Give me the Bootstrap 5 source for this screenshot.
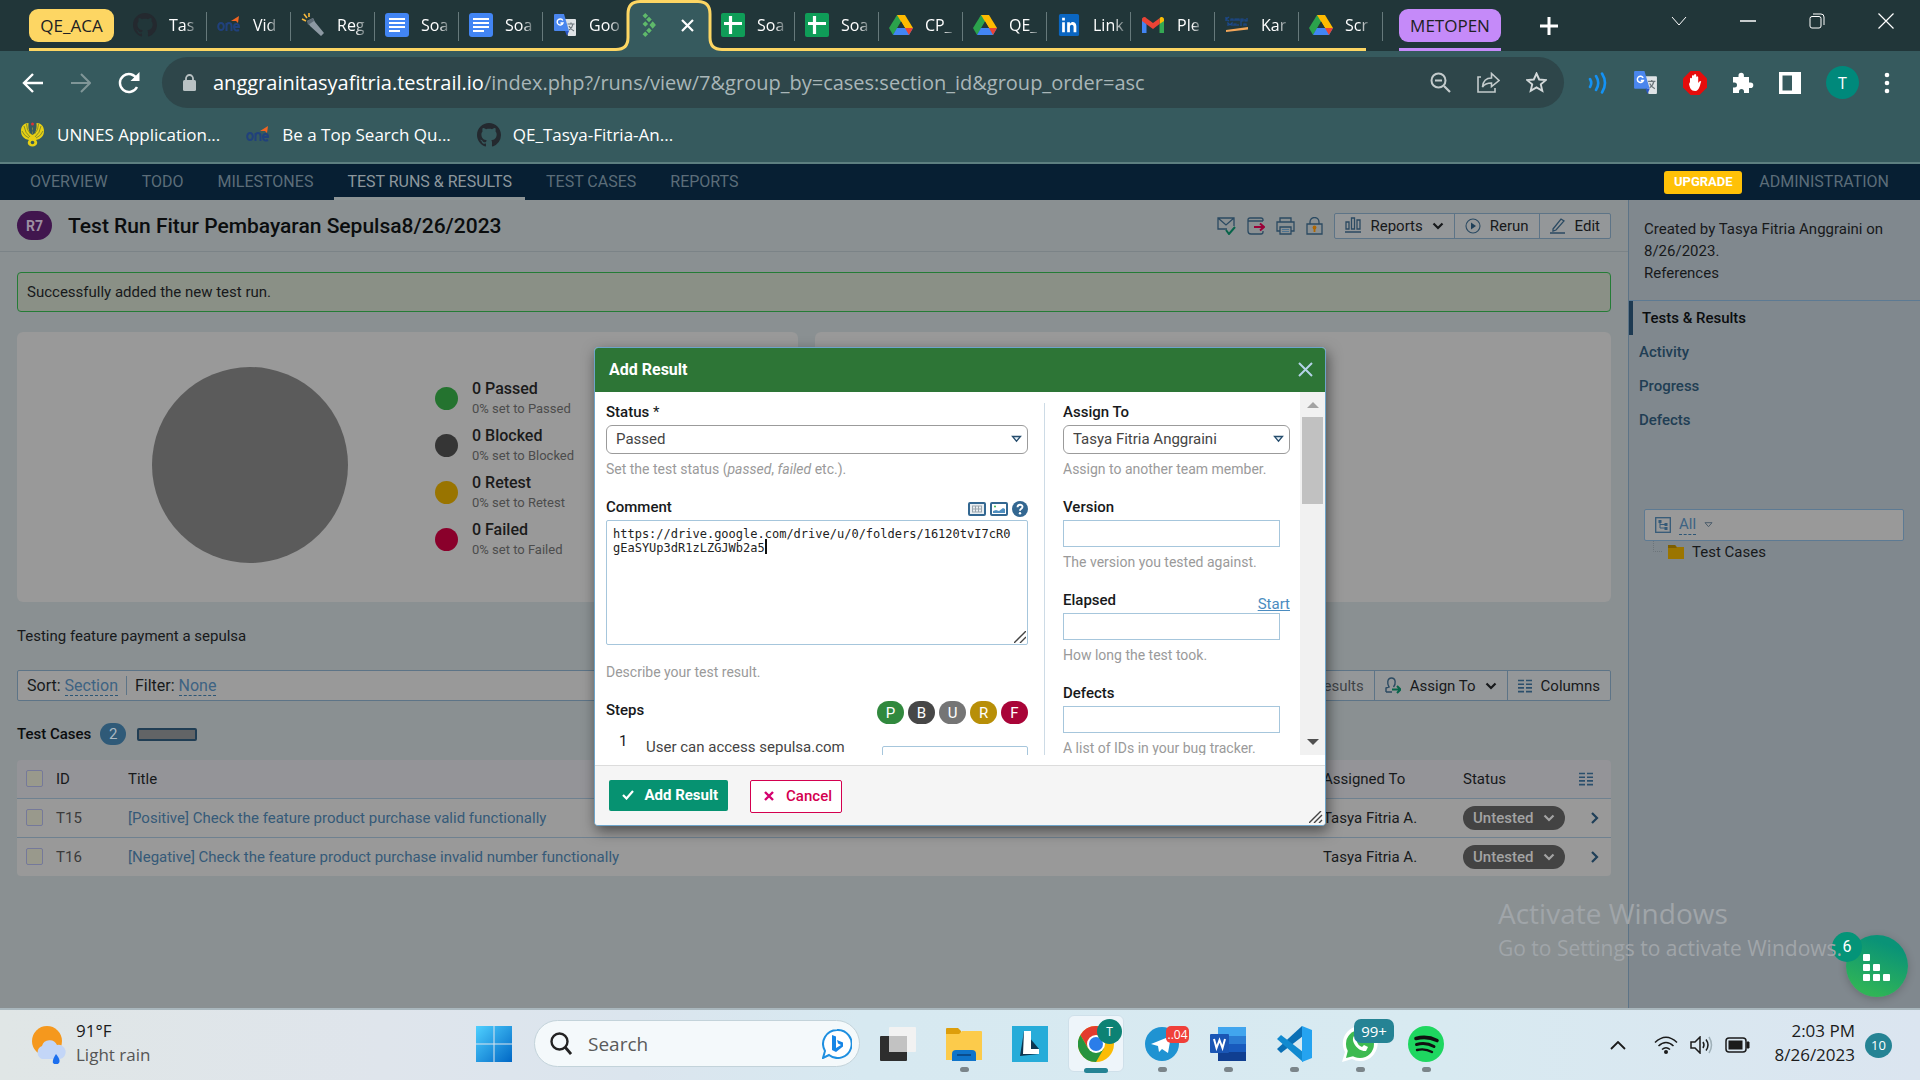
<!DOCTYPE html>
<html lang="en">
<head>
<meta charset="utf-8">
<meta name="viewport" content="width=device-width, initial-scale=1">
<title>Test Run Fitur Pembayaran Sepulsa8/26/2023 - TestRail</title>
<link rel="stylesheet" href="https://cdn.jsdelivr.net/npm/bootstrap@5.3.0/dist/css/bootstrap.min.css">
<style>
body{font-family:Roboto,"Liberation Sans",sans-serif;font-size:15px;line-height:20px;color:#17191b;background:#8a9092}
svg{display:block;flex:none}
button{color:inherit}
.seg{font-family:"Open Sans","Noto Sans",sans-serif}
.plain-btn{background:none;border:0;padding:0;display:flex;align-items:center;justify-content:center}
/* browser chrome */
.tabstrip{background:#213639;height:51px;color:#fff;font-size:16px}
.tabgroup{margin-left:29px}
.tabgroup::after{content:"";position:absolute;left:0;right:17px;bottom:0;height:3px;background:#fdd663}
.chip{height:33px;border-radius:9px;color:#202124;font-size:17px;margin-top:9px;border:0;padding:0}
.chip-y{background:#fdd663;width:85px;margin-right:9px}
.chip-p{background:#c58af9;width:102px}
.chipbox-p{border-bottom:3px solid #c58af9}
.tab{width:84px;height:51px;padding:0 4px 1px 10px;gap:12px}
.tab::after{content:"";position:absolute;right:0;top:12px;height:29px;width:1px;background:#66797b}
.tab.nosep::after{display:none}
.tab span{white-space:nowrap;-webkit-mask-image:linear-gradient(90deg,#000 65%,rgba(0,0,0,.3));mask-image:linear-gradient(90deg,#000 65%,rgba(0,0,0,.3))}
.tab-shape{position:absolute;left:-15px;top:0;z-index:1}
.tab-top{position:relative;z-index:2}
.winctl{width:69px;height:42px}
.chrome-bar{background:#365a5e;color:#fff}
.toolbar-row{height:63px}
.omnibox{background:#2e464a;height:51px;border-radius:26px;font-size:20px;color:#a9b6b8}
.omni-host{color:#fff}
.bookmarks{height:50px;font-size:17px;padding-left:20px;border-bottom:2px solid #5d7f80;padding-bottom:7px}
.bookmarks a{color:#fff;text-decoration:none;gap:12px}
.avatar{width:33px;height:33px;background:#00897b;font-size:16px}
/* app */
.appnav{background:#071f33;height:36px;font-size:16px}
.appnav a{color:#5c6d79;text-decoration:none;padding:0 13px;height:36px;line-height:35px}
.appnav a.on{color:#8d979d;border-bottom:3px solid #8c9496}
.upgrade{background:#ffc107;color:#fff;font-weight:700;font-size:13px;border:0;border-radius:3px;height:23px;width:78px}
.side{width:292px;flex:none;background:#80888e;border-left:1px solid #5d7487}
.titlebar{height:52px;border-bottom:1px solid #7b8387;padding:0 17px}
.runbadge{width:35px;height:29px;border-radius:15px;background:#41164e;color:#9c8fa1;font-size:14px;font-weight:700}
h1.run-title{font-size:21px;line-height:24px;font-weight:500;margin:0;color:#0b0d0e}
.grp{border:1px solid #5d7487;background:#949799;border-radius:2px}
.grp button{border-radius:0;border:0;border-left:1px solid #5d7487;padding:0 10px;font-size:15px;background:none;display:flex;align-items:center;gap:9px;line-height:20px}
.grp button:first-child{border-left:0}
.okmsg{height:40px;border:1px solid #247c36;border-radius:4px;background:#8a9086;padding:0 9px;font-size:15px}
.panel{background:#999;border-radius:6px;height:270px}
.panel-l{flex:0 0 49%;padding:0 0 4px 135px}
.pie{width:196px;height:196px;background:#5b5b5b}
.legend-list{margin-left:87px;padding-top:8px}
.leg{height:47px;gap:14px}
.leg i{width:23px;height:23px;border-radius:50%}
.leg b{font-weight:500;font-size:16px;display:block;line-height:21px;color:#1b1b1b}
.leg em{font-style:normal;font-size:13px;color:#4c4c4c;display:block;line-height:20px}
.filterbar{height:31px;border:1px solid #5d7487;border-radius:2px;background:#999}
.sorts{font-size:16px;padding-left:9px}
.dash{color:#3d6383;text-decoration:none;border-bottom:1px dashed #2c5676;line-height:19px}
.cnt{width:26px;height:22px;border-radius:11px;background:#2f5a78;color:#a9b7c1}
.runs{margin:0;border-radius:4px;overflow:hidden;--bs-table-bg:#999;table-layout:fixed}
.runs th,.runs td{padding:0;font-weight:400;vertical-align:middle;height:39px;border-bottom:1px solid #6f8190;color:#17191b;background:#999;box-shadow:none}
.runs th{background:#949498;height:38px}
.runs tr:last-child td{border-bottom:0}
.runs a{color:#355a78;text-decoration:none}
.runs .form-check-input{width:17px;height:17px;margin:0 0 0 9px;display:block;border:1px solid #75799a;border-radius:2px;background-color:#99998c}
.pill{background:#434343;color:#a3a3a3;border:0;border-radius:12px;height:24px;width:102px;font-weight:500;font-size:15px;display:flex;align-items:center;justify-content:space-between;padding:0 10px}
.side-info{padding:18px 15px 17px;line-height:22px;height:101px;border-bottom:1px solid #5d7a93}
.side-nav a{display:block;height:34px;line-height:34px;padding-left:10px;font-weight:500;color:#213e54;text-decoration:none}
.side-nav a.on{border-left:4px solid #1d3a52;padding-left:9px;color:#0b0d0e}
.treebox{height:32px;border:1px solid #5d7a93;border-radius:2px;background:#999;margin:72px 16px 0 15px;padding:0 10px;gap:8px}
.treerow{padding-left:24px;height:22px;gap:7px}
.watermark{position:absolute;left:1498px;bottom:44px;color:#a0a5a9;pointer-events:none;white-space:nowrap}
.watermark div{font-size:28px;line-height:38px}
.watermark p{font-size:21px;line-height:32px;margin:0}
.helper{position:absolute;right:12px;bottom:11px;width:62px;height:62px;border:0;border-radius:50%;background:linear-gradient(200deg,#0a9377 20%,#2fb457 85%);box-shadow:0 2px 8px rgba(0,0,0,.2)}
.helper span{position:absolute;left:-14px;top:-3px;width:30px;height:30px;border-radius:50%;background:#049478;color:#fff;font-size:16px;line-height:30px}
/* dialog */
.veil{position:absolute;left:0;right:0;top:0;bottom:0}
.dlg{width:732px;border:1px solid #6da4c9;border-radius:4px;background:#fff;overflow:hidden;box-shadow:2px 5px 14px rgba(0,0,0,.5)}
.dlg-head{background:#2d7536;color:#fff;height:44px;font-weight:700;font-size:16px;padding:0 12px 0 14px}
.dlg-body{height:363px;overflow:hidden;margin-bottom:10px}
.dlg-foot{border-top:1px solid #dcdcdc;background:#f5f5f5;height:60px;padding:14px;position:relative;gap:22px}
.lcol{width:450px;padding-left:11px;padding-right:16px;margin-top:11px;border-right:1px solid #cddbe6}
.rcol{padding:11px 10px 0 18px}
.flabel{font-weight:500;font-size:15px;line-height:18px;height:18px;color:#17191b;margin-bottom:4px}
.hint{color:#9a9a9a;font-size:14px;line-height:20px;margin:5px 0 19px}
.dlg .form-select{height:29px;border:1px solid #9b9b9b;border-radius:6px;padding:0 28px 0 9px;font-size:15px;line-height:26px;color:#444;background-color:#fff;background-position:right 5px center;background-size:11px 8px;background-image:url("data:image/svg+xml,%3Csvg xmlns='http://www.w3.org/2000/svg' viewBox='0 0 11 8'%3E%3Cpath d='M1.5 1.5h8L5.500 6.200z' fill='%23e8f2fa' stroke='%23264d6d' stroke-width='1.300'/%3E%3C/svg%3E")}
.dlg .form-control{border:1px solid #a6c6dc;border-radius:0;padding:0;height:27px;width:217px}
.dlg textarea.form-control{width:100%;height:125px;border-radius:2px;padding:6px;font:12px/14px "DejaVu Sans Mono",monospace;color:#222;resize:none;overflow:hidden}
.caret{position:absolute;left:159px;top:19px;width:2px;height:15px;background:#111}
.grip{position:absolute;right:2px;bottom:2px}
.st{width:27px;height:23px;border-radius:12px;border:0;color:#fff;font-size:15px;line-height:24px;padding:0}
.sbar{width:25px;background:#f1f1f1;padding:10px 2px}
.sthumb{height:87px;background:#c1c1c1}
.addbtn{height:31px;width:119px;background:#069271;border:0;border-radius:2px;color:#fff;font-weight:700;font-size:15px;padding:0 10px 0 13px}
.cxbtn{height:33px;width:92px;background:#fff;border:1px solid #d4004f;border-radius:2px;color:#d4004f;font-weight:500;font-size:15px;padding:0 9px 0 13px}
/* taskbar */
.taskbar{height:72px;border-top:2px solid #a9b7bd;background:linear-gradient(90deg,#e0e6e6 0,#dfe5ec 20%,#dbe5ee 33%,#d7e9f1 45%,#d8eaf1 75%,#dbe5f0 100%);display:grid;grid-template-columns:1fr auto 1fr;color:#1b1b1b;font-size:17px}
.slot{width:66px;height:70px;position:relative;display:flex;align-items:center;justify-content:center;background:none;border:0;padding:0 0 2px}
.slot.run::after{content:"";position:absolute;left:29px;bottom:8px;width:9px;height:5px;border-radius:3px;background:#7b858a}
.slot.act::after{content:"";position:absolute;left:21px;width:24px;height:5px;border-radius:3px;background:#258394;bottom:7px}
.slot.act::before{content:"";position:absolute;left:5px;top:5px;width:56px;height:57px;border-radius:6px;background:#eef5fa;border:1px solid #cfe0ea}
.slot svg{position:relative}
.slot b{position:absolute;font-weight:400;color:#fff;text-align:center}
.find{width:326px;height:47px;border-radius:24px;background:#f4f9fb;border:1px solid #c3d3da;margin:10px 5px 0 7px;padding:0 7px 0 15px;gap:14px}
.find input{background:none;border:0;outline:0;font-size:19px;color:#444;width:100%}
.find input::placeholder{color:#5a5a5a;opacity:1}
.clock{line-height:24px}
.notif{margin-left:10px;width:27px;height:25px;background:#258394;font-size:13px;line-height:25px}
</style>
<script src="https://cdn.jsdelivr.net/npm/bootstrap@5.3.0/dist/js/bootstrap.bundle.min.js"></script>
</head>
<body class="d-flex flex-column vh-100 overflow-hidden">
<svg width="0" height="0" class="position-absolute" aria-hidden="true">
<symbol id="gh" viewBox="0 0 16 16"><path fill="#24292f" d="M8 0C3.580 0 0 3.580 0 8c0 3.540 2.290 6.530 5.470 7.590.4.070.55-.17.55-.38 0-.19-.01-.82-.01-1.490-2.010.37-2.530-.49-2.690-.94-.09-.23-.48-.94-.82-1.130-.28-.15-.68-.52-.01-.53.63-.01 1.080.58 1.230.82.72 1.210 1.870.87 2.330.66.07-.52.28-.87.51-1.070-1.780-.2-3.640-.89-3.640-3.950 0-.87.31-1.590.82-2.150-.08-.2-.36-1.020.08-2.120 0 0 .67-.21 2.200.82.64-.18 1.320-.27 2-.27s1.360.09 2 .27c1.530-1.040 2.200-.82 2.200-.82.44 1.100.16 1.920.08 2.120.51.56.82 1.270.82 2.150 0 3.070-1.870 3.750-3.650 3.950.29.25.54.73.54 1.480 0 1.070-.01 1.930-.01 2.200 0 .21.15.46.55.38A8.010 8.010 0 0 0 16 8c0-4.420-3.580-8-8-8z"/></symbol>
<symbol id="one" viewBox="0 0 24 24"><g fill="none" stroke="#20417c" stroke-width="2"><ellipse cx="4" cy="13.500" rx="2.800" ry="3.600"/><path d="M9.500 18v-8M9.500 13c0-4 5-4 5 0v5M17 14h5c0-4-5-4-5 0 0 4 3 4 5 3"/></g><path d="M14 8l8-5-1 7-2-2z" fill="#f26522"/></symbol>
<symbol id="docs" viewBox="0 0 24 24"><rect width="24" height="24" rx="3" fill="#4285f4"/><path d="M4 6h16M4 10h16M4 14h16M4 18h11" stroke="#fff" stroke-width="2"/></symbol>
<symbol id="sheet" viewBox="0 0 24 24"><rect width="24" height="24" rx="2" fill="#0f9d58"/><path d="M3 10.500h18M9.500 3v18" stroke="#fff" stroke-width="3.200"/></symbol>
<symbol id="gtr" viewBox="0 0 24 24"><path d="M10 6h12a1 1 0 0 1 1 1v15a1 1 0 0 1-1 1h-7z" fill="#dfe3e6"/><path d="M1 2a1 1 0 0 1 1-1h9l5 17H2a1 1 0 0 1-1-1z" fill="#4a86ee"/><path d="M12 18h4l-2 5z" fill="#2a56c6"/><path d="M9.800 7.500A3 3 0 1 0 10 10H7.500" fill="none" stroke="#fff" stroke-width="1.400"/><path d="M14.500 11h7M18 9.500V11m2 0c-.5 3-2.500 5-4 6m0-4c1 2 3 4 5 5" fill="none" stroke="#6b757b" stroke-width="1.200"/></symbol>
<symbol id="drive" viewBox="0 0 24 22"><path d="M8 1h8l-8 14-4 6-4-7z" fill="#2ba24c"/><path d="M8 1h8l8 13h-8z" fill="#ffba00"/><path d="M4 21l4-7h16l-4 7z" fill="#4285f4"/><path d="M16 14h8l-4 7z" fill="#ea4335"/><path d="M12 7.500L8.200 14h7.600z" fill="#213639"/></symbol>
<symbol id="tr" viewBox="0 0 16 26"><g fill="#5fb96b"><path d="M4 0l3 3-3 3-3-3zM8 4l3 3-3 3-3-3zM4 9l3 3-3 3-3-3zM8 12l0 0zM12 9l3.500 4-3.500 4-3.500-4zM8 16l3 3-3 3-3-3zM4 20l3 3-3 3-3-3z"/></g></symbol>
<symbol id="chev" viewBox="0 0 12 8"><path d="M1.500 1.500L6 6l4.500-4.500" fill="none" stroke="currentColor" stroke-width="2.200"/></symbol>
<symbol id="cols" viewBox="0 0 14 14"><path d="M0 1.500h6M8 1.500h6M0 5.200h6M8 5.200h6M0 8.900h6M8 8.900h6M0 12.600h6M8 12.600h6" stroke="#2b4f6c" stroke-width="1.600"/></symbol>
</svg>

<div class="tabstrip seg d-flex flex-shrink-0">
  <div class="tabgroup d-flex position-relative">
    <button class="chip chip-y">QE_ACA</button>
    <div class="tab d-flex align-items-center position-relative"><svg width="24" height="24"><use href="#gh"/></svg><span>Tas</span></div>
    <div class="tab d-flex align-items-center position-relative"><svg width="24" height="24"><use href="#one"/></svg><span>Vid</span></div>
    <div class="tab d-flex align-items-center position-relative"><svg width="24" height="24" viewBox="0 0 24 24"><path d="M6 8l6-3 2 4 9 11-3 3L9 13z" fill="#8d99a3"/><path d="M6 8l6-3 1 3-6 4z" fill="#5d6a75"/><path d="M1 6l4 2M3 1l3 4M8 0v4" stroke="#f6b83c" stroke-width="1.600"/></svg><span>Reg</span></div>
    <div class="tab d-flex align-items-center position-relative"><svg width="24" height="24"><use href="#docs"/></svg><span>Soa</span></div>
    <div class="tab d-flex align-items-center position-relative"><svg width="24" height="24"><use href="#docs"/></svg><span>Soa</span></div>
    <div class="tab nosep d-flex align-items-center position-relative"><svg width="24" height="24"><use href="#gtr"/></svg><span>Goo</span></div>
    <div class="tab nosep d-flex align-items-center position-relative" style="z-index:1">
      <svg class="tab-shape" width="114" height="51" viewBox="0 0 114 51"><path d="M0 51v-1.500h4q12 0 12-12V14q0-12.500 12-12.500h58q12 0 12 12.500v23.500q0 12 12 12h4V51z" fill="#365a5e"/><path d="M0 49.500h4q12 0 12-12V14q0-12.500 12-12.500h58q12 0 12 12.500v23.500q0 12 12 12h4" fill="none" stroke="#fdd663" stroke-width="3"/></svg>
      <svg class="tab-top" width="24" height="24"><use href="#tr"/></svg>
      <button class="plain-btn tab-top ms-2" aria-label="Close tab"><svg width="13" height="13" viewBox="0 0 13 13"><path d="M1 1l11 11M12 1L1 12" stroke="#fff" stroke-width="2.200"/></svg></button></div>
    <div class="tab d-flex align-items-center position-relative"><svg width="24" height="24"><use href="#sheet"/></svg><span>Soa</span></div>
    <div class="tab d-flex align-items-center position-relative"><svg width="24" height="24"><use href="#sheet"/></svg><span>Soa</span></div>
    <div class="tab d-flex align-items-center position-relative"><svg width="24" height="22"><use href="#drive"/></svg><span>CP_</span></div>
    <div class="tab d-flex align-items-center position-relative"><svg width="24" height="22"><use href="#drive"/></svg><span>QE_</span></div>
    <div class="tab d-flex align-items-center position-relative"><svg width="24" height="22" viewBox="0 0 24 24"><rect x="1" width="22" height="24" rx="2" fill="#0a66c2"/><path d="M4.500 9h3v11h-3zM4.500 4h3v3h-3zM10 9h3v1.500c2-3 7-2 7 2.500v7h-3v-6c0-3-4-3-4 0v6h-3z" fill="#fff"/></svg><span>Link</span></div>
    <div class="tab d-flex align-items-center position-relative"><svg width="24" height="18" viewBox="0 0 24 18"><path d="M1 2v15h4.500V8z" fill="#4285f4"/><path d="M23 2v15h-4.500V8z" fill="#34a853"/><path d="M18.500 8V2.500C20 0 23 1 23 3.500V5z" fill="#fbbc04"/><path d="M1 3.500C1 1 4 0 5.500 2.200L12 7l6.500-4.800V8L12 13 1 5z" fill="#ea4335"/></svg><span>Ple</span></div>
    <div class="tab d-flex align-items-center position-relative"><svg width="24" height="18" viewBox="0 0 24 18"><path d="M1 5V1M1 3l3-2M1 3l3 2M6 5V3h2v2M10 5V3h2v2V3h2v2M16 7V3h2v2h-2M20 3v2h2V2M3 10V7l2 2 2-2v3M9 10V8h2v2M13 10V8M16 10V7M19 10V8h2v2" fill="none" stroke="#1c4a8f" stroke-width="1.200"/><path d="M1 14l22-3v2.500L1 16z" fill="#f2a65a"/></svg><span>Kar</span></div>
    <div class="tab d-flex align-items-center position-relative"><svg width="24" height="22"><use href="#drive"/></svg><span>Scr</span></div>
  </div>
  <div class="chipbox-p ms-3"><button class="chip chip-p">METOPEN</button></div>
  <button class="plain-btn me-auto" style="width:34px;margin-left:31px" aria-label="New tab"><svg width="18" height="18" viewBox="0 0 18 18"><path d="M9 0v18M0 9h18" stroke="#fff" stroke-width="3"/></svg></button>
  <button class="plain-btn winctl" aria-label="Search tabs"><svg width="16" height="9" viewBox="0 0 16 9"><path d="M1 0l7 8 7-8" fill="none" stroke="#fff"/></svg></button>
  <button class="plain-btn winctl" aria-label="Minimize"><svg width="16" height="2"><path d="M0 1h16" stroke="#fff" stroke-width="1.500"/></svg></button>
  <button class="plain-btn winctl" aria-label="Restore"><svg width="16" height="16" viewBox="0 0 16 16"><rect x="1" y="3.500" width="11" height="11.500" rx="2" fill="none" stroke="#fff"/><path d="M4 1h8q3 0 3 3v8" fill="none" stroke="#fff"/></svg></button>
  <button class="plain-btn winctl" aria-label="Close"><svg width="16" height="16" viewBox="0 0 16 16"><path d="M.5.5l15 15M15.500.5l-15 15" stroke="#fff" stroke-width="1.200"/></svg></button>
</div>

<div class="chrome-bar seg flex-shrink-0">
  <div class="toolbar-row d-flex align-items-center" style="padding-left:22px">
    <button class="plain-btn" aria-label="Back"><svg width="22" height="20" viewBox="0 0 22 20"><path d="M21 10H2M11 1l-9 9 9 9" fill="none" stroke="#fff" stroke-width="2.400"/></svg></button>
    <button class="plain-btn" style="margin-left:27px" aria-label="Forward"><svg width="20" height="20" viewBox="0 0 20 20"><path d="M0 10h19M10 1l9 9-9 9" fill="none" stroke="#809698" stroke-width="2"/></svg></button>
    <button class="plain-btn" style="margin-left:27px" aria-label="Reload"><svg width="23" height="22" viewBox="0 0 23 22"><path d="M19 15a9 9 0 1 1 0-8" fill="none" stroke="#fff" stroke-width="2.400"/><path d="M21.500 0v9h-9z" fill="#fff"/></svg></button>
    <div class="omnibox d-flex align-items-center flex-grow-1" style="margin:0 24px 0 21px;padding:0 17px 0 21px">
      <svg width="13" height="17" viewBox="0 0 13 17"><rect y="6" width="13" height="11" rx="1.500" fill="#b9c2c4"/><path d="M3 7V4.500a3.500 3.500 0 0 1 7 0V7" fill="none" stroke="#b9c2c4" stroke-width="1.800"/></svg>
      <div class="flex-grow-1" style="margin-left:17px"><span class="omni-host">anggrainitasyafitria.testrail.io</span>/index.php?/runs/view/7&amp;group_by=cases:section_id&amp;group_order=asc</div>
      <div class="d-flex align-items-center" style="gap:26px">
      <svg width="21" height="21" viewBox="0 0 21 21"><circle cx="8.500" cy="8.500" r="7" fill="none" stroke="#c3cbcc" stroke-width="2"/><path d="M5 8.500h7M14 14l6 6" stroke="#c3cbcc" stroke-width="2.200"/></svg>
      <svg width="23" height="21" viewBox="0 0 23 21"><path d="M4 5H1v15h17v-4" fill="none" stroke="#c3cbcc" stroke-width="1.600"/><path d="M5.500 15c.5-6 4-9 9-9V1.500L22 8.500l-7.500 6V11c-4 0-7 1-9 4z" fill="none" stroke="#c3cbcc" stroke-width="1.600"/></svg>
      <svg width="21" height="21" viewBox="0 0 21 21"><path d="M10.500 1.500l2.700 6 6.600.6-5 4.300 1.500 6.500-5.800-3.500-5.800 3.500 1.500-6.500-5-4.300 6.600-.6z" fill="none" stroke="#d3d9da" stroke-width="1.900"/></svg>
      </div>
    </div>
    <div class="d-flex align-items-center" style="gap:25px;padding-right:30px">
      <svg width="20" height="22" viewBox="0 0 20 22"><g fill="none" stroke="#1492f5" stroke-width="2.600" stroke-linecap="round"><path d="M2 7q2.500 4 0 8M8 4q4.500 7 0 14M14 1.500q6 9.500 0 19"/></g></svg>
      <svg width="25" height="25"><use href="#gtr"/></svg>
      <svg width="24" height="24" viewBox="0 0 24 24"><path d="M7.500 0h9L24 7.500v9L16.500 24h-9L0 16.500v-9z" fill="#e60c0c"/><path d="M7 11V7.500q1-1.500 2 0V5q1-2 2 0V4q1.200-2 2.200 0v2q1-1.500 2 0v6q2-3 3-1.500c-1 2-1.500 9.500-6 9.500S7 17 6 13z" fill="#fff"/></svg>
      <svg width="22" height="22" viewBox="0 0 22 22"><path d="M1 5h5.500V3.500a2.700 2.700 0 0 1 5.400 0V5H17v5.500h1.500a2.800 2.800 0 0 1 0 5.600H17V21h-5v-1.500a2.500 2.500 0 0 0-5 0V21H1v-5.500h1.500a2.500 2.500 0 0 0 0-5H1z" fill="#fff"/></svg>
      <svg width="22" height="22" viewBox="0 0 22 22"><path fill-rule="evenodd" d="M0 0h22v22H0zM3.500 3.500v15H13v-15z" fill="#fff"/></svg>
      <div class="avatar rounded-circle d-flex align-items-center justify-content-center">T</div>
      <svg width="6" height="22" viewBox="0 0 6 22"><g fill="#fff"><circle cx="3" cy="3" r="2.300"/><circle cx="3" cy="11" r="2.300"/><circle cx="3" cy="19" r="2.300"/></g></svg>
    </div>
  </div>
  <div class="bookmarks d-flex align-items-center" style="gap:26px">
    <a href="#" class="d-flex align-items-center"><svg width="25" height="25" viewBox="0 0 25 25"><path d="M12.500 5C11 8 14 9 12.500 13 9 11 8 7 8.500 1 4 1 1 4 1 9c0 5 3 8 8 9-2 2-2 6 3.500 6.500C18 24 18 20 16 18c5-1 8-4 8-9 0-5-3-8-7.500-8 .5 6-.5 10-4 12" fill="#e6cf14"/><path d="M4 4q1 7 6 11M21 4q-1 7-6 11M2 9q2 5 7 7M23 9q-2 5-7 7M6.500 2q0 6 4 10M18.500 2q0 6-4 10" stroke="#6f7d2c" stroke-width=".8" fill="none"/><circle cx="12.500" cy="20.500" r="1.800" fill="#365a5e"/><circle cx="12.500" cy="2" r="1.500" fill="#d33"/></svg>UNNES Application...</a>
    <a href="#" class="d-flex align-items-center"><svg width="24" height="24"><use href="#one"/></svg>Be a Top Search Qu...</a>
    <a href="#" class="d-flex align-items-center"><svg width="24" height="24"><use href="#gh"/></svg>QE_Tasya-Fitria-An...</a>
  </div>
</div>

<div class="flex-grow-1 d-flex flex-column position-relative overflow-hidden">
  <nav class="appnav d-flex align-items-center flex-shrink-0" style="padding:0 18px 0 17px">
    <a href="#">OVERVIEW</a><a href="#" class="ms-2">TODO</a><a href="#" class="ms-2">MILESTONES</a><a href="#" class="on ms-2">TEST RUNS &amp; RESULTS</a><a href="#" class="ms-2">TEST CASES</a><a href="#" class="ms-2">REPORTS</a>
    <button class="upgrade ms-auto">UPGRADE</button><a href="#" class="ms-1">ADMINISTRATION</a>
  </nav>
  <div class="d-flex flex-grow-1">
    <main class="flex-grow-1" style="min-width:0">
      <div class="titlebar d-flex align-items-center">
        <div class="runbadge d-flex align-items-center justify-content-center me-3">R7</div>
        <h1 class="run-title">Test Run Fitur Pembayaran Sepulsa8/26/2023</h1>
        <div class="d-flex align-items-center ms-auto" style="gap:11px">
          <svg width="19" height="18" viewBox="0 0 19 18"><path d="M10 12H1V1h16v8M1 1l8 7 8-7" fill="none" stroke="#2b4a62" stroke-width="1.300"/><path d="M9 13l3 4 6-7" fill="none" stroke="#07644a" stroke-width="2"/></svg>
          <svg width="18" height="18" viewBox="0 0 18 18"><path d="M16 4V3q0-2-2-2H3Q1 1 1 3v11q0 3 3 3h10q2 0 2-2v-1M1 4h15" fill="none" stroke="#2b4a62" stroke-width="1.300"/><path d="M7 10h9M13 6.500l4 3.500-4 3.500" fill="none" stroke="#9b0038" stroke-width="2"/></svg>
          <svg width="19" height="18" viewBox="0 0 19 18"><path d="M4 5V1h11v4M4 14H1V5h17v9h-3M4 10h11v7H4z" fill="none" stroke="#2b4a62" stroke-width="1.300"/><path d="M6 12.500h7M6 14.500h7" stroke="#4d7391"/></svg>
          <svg width="17" height="18" viewBox="0 0 17 18"><path d="M4 7V5a4.500 4.500 0 0 1 9 0v2M1 7h15v10H1z" fill="none" stroke="#2b4a62" stroke-width="1.300"/><circle cx="8.500" cy="10.500" r="1.900" fill="#b06700"/><path d="M8.500 11v4" stroke="#b06700" stroke-width="1.800"/></svg>
          <div class="grp d-flex" style="height:26px">
            <button><svg width="16" height="17" viewBox="0 0 16 17"><path d="M1 5h3v7H1zM6.500 1h3v11h-3zM12 3h3v9h-3zM0 15h16" fill="none" stroke="#2b4a62" stroke-width="1.300"/></svg>Reports<svg width="12" height="8"><use href="#chev"/></svg></button>
            <button><svg width="16" height="16" viewBox="0 0 16 16"><circle cx="8" cy="8" r="7" fill="none" stroke="#2b4a62" stroke-width="1.100"/><path d="M6 4.500l5 3.500-5 3.500z" fill="#1f3f58"/></svg>Rerun</button>
            <button><svg width="16" height="16" viewBox="0 0 16 16"><path d="M3 11L11 1l3 2-8 9-3 1zM0 15h15" fill="none" stroke="#2b4a62" stroke-width="1.300"/></svg>Edit</button>
          </div>
        </div>
      </div>
      <div style="padding:20px 17px 0">
        <div class="okmsg d-flex align-items-center">Successfully added the new test run.</div>
        <div class="d-flex" style="gap:17px;margin-top:20px">
          <div class="panel panel-l d-flex align-items-center">
            <div class="pie rounded-circle"></div>
            <div class="legend-list">
              <div class="leg d-flex align-items-center"><i style="background:#24732f"></i><div><b>0 Passed</b><em>0% set to Passed</em></div></div>
              <div class="leg d-flex align-items-center"><i style="background:#353535"></i><div><b>0 Blocked</b><em>0% set to Blocked</em></div></div>
              <div class="leg d-flex align-items-center"><i style="background:#997400"></i><div><b>0 Retest</b><em>0% set to Retest</em></div></div>
              <div class="leg d-flex align-items-center"><i style="background:#8a002b"></i><div><b>0 Failed</b><em>0% set to Failed</em></div></div>
            </div>
          </div>
          <div class="panel flex-grow-1"></div>
        </div>
        <p class="mb-0" style="padding:24px 0">Testing feature payment a sepulsa</p>
        <div class="filterbar d-flex">
          <div class="sorts d-flex align-items-center">Sort:&nbsp;<a href="#" class="dash">Section</a><span class="mx-2" style="width:1px;height:19px;background:#5d7487"></span>Filter:&nbsp;<a href="#" class="dash">None</a></div>
          <div class="grp border-0 d-flex ms-auto">
            <button disabled class="text-body-secondary">Add Results</button>
            <button><svg width="16" height="17" viewBox="0 0 16 17"><path d="M1 15v-4l3-1c-2-3-2-9 2.500-9S11 7 8.500 10M1 15h6" fill="none" stroke="#2b4a62" stroke-width="1.400"/><path d="M7 12.500h8M12 9l3.500 3.500L12 16" fill="none" stroke="#07644a" stroke-width="2"/></svg>Assign To<svg width="12" height="8"><use href="#chev"/></svg></button>
            <button><svg width="14" height="14"><use href="#cols"/></svg>Columns</button>
          </div>
        </div>
        <div class="d-flex align-items-center" style="height:59px;gap:9px;padding-top:7px"><span style="font-weight:500;color:#0b0d0e">Test Cases</span><span class="cnt d-flex align-items-center justify-content-center">2</span><span style="margin-left:2px;width:60px;height:13px;border:2px solid #213e54;border-radius:2px;background:#626466"></span></div>
        <table class="table runs">
          <colgroup><col style="width:39px"><col style="width:72px"><col><col style="width:140px"><col style="width:112px"><col style="width:36px"></colgroup>
          <thead><tr><th><input class="form-check-input" type="checkbox" aria-label="Select all"></th><th>ID</th><th>Title</th><th>Assigned To</th><th>Status</th><th><svg class="ms-1" width="14" height="14"><use href="#cols"/></svg></th></tr></thead>
          <tbody>
          <tr><td><input class="form-check-input" type="checkbox" aria-label="T15"></td><td style="color:#3b3b3b">T15</td><td><a href="#">[Positive] Check the feature product purchase valid functionally</a></td><td>Tasya Fitria A.</td><td><button class="pill">Untested<svg width="12" height="8"><use href="#chev"/></svg></button></td><td><a href="#" aria-label="Open T15"><svg width="8" height="12" viewBox="0 0 8 12" class="ms-3"><path d="M1 1l5 5-5 5" fill="none" stroke="#1f3f58" stroke-width="2.200"/></svg></a></td></tr>
          <tr><td><input class="form-check-input" type="checkbox" aria-label="T16"></td><td style="color:#3b3b3b">T16</td><td><a href="#">[Negative] Check the feature product purchase invalid number functionally</a></td><td>Tasya Fitria A.</td><td><button class="pill">Untested<svg width="12" height="8"><use href="#chev"/></svg></button></td><td><a href="#" aria-label="Open T16"><svg width="8" height="12" viewBox="0 0 8 12" class="ms-3"><path d="M1 1l5 5-5 5" fill="none" stroke="#1f3f58" stroke-width="2.200"/></svg></a></td></tr>
          </tbody>
        </table>
      </div>
    </main>
    <aside class="side">
      <div class="side-info">Created by Tasya Fitria Anggraini on 8/26/2023.<br>References</div>
      <nav class="side-nav"><a href="#" class="on">Tests &amp; Results</a><a href="#">Activity</a><a href="#">Progress</a><a href="#">Defects</a></nav>
      <div class="treebox d-flex align-items-center"><svg width="16" height="16" viewBox="0 0 16 16"><rect x=".7" y=".7" width="14.600" height="14.600" fill="none" stroke="#355a78" stroke-width="1.300"/><path d="M5 4v7h5M5 7.500h5" fill="none" stroke="#355a78"/><path d="M3.500 3h3v3h-3zM9.500 6h3v3h-3zM9.500 10h3v3h-3z" fill="#355a78"/></svg><a href="#" class="dash">All</a><svg width="9" height="6" viewBox="0 0 9 6"><path d="M1 .7h7l-3.500 4z" fill="none" stroke="#4b5c6a"/></svg></div>
      <div class="treerow d-flex align-items-center"><svg width="32" height="22" viewBox="0 0 32 22"><path d="M.5 0v10.500H9" fill="none" stroke="#6c747a" stroke-dasharray="1 1"/><path d="M15 4h7l2 2h7v12H15z" fill="#9b7500"/><path d="M15 4h7l2 3h-9z" fill="#7d5e00"/></svg><span>Test Cases</span></div>
    </aside>
  </div>

  <button class="helper" aria-label="Help center"><span>6</span><svg class="mx-auto mt-1" width="28" height="28" viewBox="0 0 28 28"><g fill="#fff"><rect width="7" height="7" rx="1"/><rect y="10" width="7" height="7" rx="1"/><rect x="10" y="10" width="7" height="7" rx="1"/><rect y="20" width="7" height="7" rx="1"/><rect x="10" y="20" width="7" height="7" rx="1"/><rect x="20" y="20" width="7" height="7" rx="1"/></g></svg></button>
  <div class="watermark seg"><div>Activate Windows</div><p>Go to Settings to activate Windows.</p></div>

  <div class="veil d-flex align-items-center justify-content-center pe-none">
    <div class="dlg pe-auto" role="dialog" aria-label="Add Result">
      <div class="dlg-head d-flex align-items-center justify-content-between"><span>Add Result</span><button class="plain-btn" aria-label="Close"><svg width="15" height="15" viewBox="0 0 15 15"><path d="M1 1l13 13M14 1L1 14" stroke="#b5d3e8" stroke-width="2"/></svg></button></div>
      <div class="dlg-body d-flex">
        <div class="lcol">
          <label class="flabel d-block" for="status">Status <span class="fw-normal">*</span></label>
          <select id="status" class="form-select"><option>Passed</option></select>
          <div class="hint">Set the test status (<i>passed</i>, <i>failed</i> etc.).</div>
          <div class="d-flex" style="gap:4px"><label class="flabel me-auto" for="comment">Comment</label>
            <svg class="mt-1" width="18" height="14" viewBox="0 0 18 14"><rect x="1" y="1" width="16" height="12" rx="1" fill="#e9eef2" stroke="#336791" stroke-width="2"/><path d="M4 4h10M4 7h10M4 10h10M4.500 4v6M7.500 4v6M10.500 4v6M13.500 4v6" stroke="#9aa5ad"/></svg>
            <svg class="mt-1" width="18" height="14" viewBox="0 0 18 14"><rect x="1" y="1" width="16" height="12" rx="1" fill="#fff" stroke="#336791" stroke-width="2"/><path d="M3 11V9l3-1 3 1 4-3 2 1v4z" fill="#4f8fc0"/><circle cx="5" cy="4.500" r="1" fill="#3bb54a"/></svg>
            <svg style="margin-top:3px" width="16" height="16" viewBox="0 0 16 16"><circle cx="8" cy="8" r="8" fill="#336791"/><path d="M5.500 6.300c0-3.500 5-3.300 5-.5C10.500 8 8 7.700 8 9.800" fill="none" stroke="#fff" stroke-width="1.900"/><circle cx="8" cy="12.300" r="1.200" fill="#fff"/></svg></div>
          <div class="position-relative"><textarea id="comment" class="form-control" spellcheck="false">https://drive.google.com/drive/u/0/folders/16120tvI7cR0
gEaSYUp3dR1zLZGJWb2a5</textarea><span class="caret"></span><svg class="grip" width="12" height="12" viewBox="0 0 12 12"><path d="M0 12L12 0M6 12l6-6" stroke="#444" stroke-width="1.400"/></svg></div>
          <div class="hint" style="margin-top:17px">Describe your test result.</div>
          <div class="d-flex align-items-center" style="gap:4px;height:23px"><span class="flabel me-auto">Steps</span><button class="st" style="background:#31893e">P</button><button class="st" style="background:#474747">B</button><button class="st" style="background:#757575">U</button><button class="st" style="background:#b88f08">R</button><button class="st" style="background:#a90438">F</button></div>
          <div class="d-flex" style="padding-left:13px"><span style="width:27px;padding-top:7px">1</span><span class="flex-grow-1" style="padding-top:13px;color:#444">User can access sepulsa.com</span><textarea class="form-control" aria-label="Actual result" style="width:146px;height:60px;margin-top:22px"></textarea></div>
        </div>
        <div class="rcol flex-grow-1">
          <label class="flabel d-block" for="assign">Assign To</label>
          <select id="assign" class="form-select"><option>Tasya Fitria Anggraini</option></select>
          <div class="hint">Assign to another team member.</div>
          <label class="flabel d-block" for="version">Version</label>
          <input id="version" class="form-control">
          <div class="hint">The version you tested against.</div>
          <div class="d-flex justify-content-between"><label class="flabel" for="elapsed">Elapsed</label><a href="#" style="color:#4b8cc0;line-height:18px;height:18px;padding-top:4px">Start</a></div>
          <input id="elapsed" class="form-control">
          <div class="hint">How long the test took.</div>
          <label class="flabel d-block" for="defects">Defects</label>
          <input id="defects" class="form-control">
          <div class="hint">A list of IDs in your bug tracker.</div>
        </div>
        <div class="sbar d-flex flex-column align-items-center"><svg width="12" height="6" viewBox="0 0 12 6"><path d="M0 6l6-6 6 6z" fill="#a3a3a3"/></svg><div class="sthumb w-100" style="margin-top:9px"></div><svg class="mt-auto" width="12" height="6" viewBox="0 0 12 6"><path d="M0 0l6 6 6-6z" fill="#505050"/></svg></div>
      </div>
      <div class="dlg-foot d-flex align-items-start">
        <button class="addbtn d-flex align-items-center justify-content-between"><svg width="12" height="10" viewBox="0 0 12 10"><path d="M1 5l3.500 3.500L11 1" fill="none" stroke="#fff" stroke-width="2.200"/></svg>Add Result</button>
        <button class="cxbtn d-flex align-items-center justify-content-between"><svg width="10" height="10" viewBox="0 0 10 10"><path d="M1 1l8 8M9 1L1 9" stroke="#d4006f" stroke-width="2.400"/></svg>Cancel</button>
        <svg class="grip" width="14" height="12" viewBox="0 0 14 12"><path d="M0 12L12 0M5 12l8-8M10 12l3-3" stroke="#444" stroke-width="1.400"/></svg>
      </div>
    </div>
  </div>
</div>

<footer class="taskbar seg flex-shrink-0">
  <div class="d-flex align-items-center" style="padding-left:32px;gap:10px">
    <svg width="34" height="38" viewBox="0 0 34 38"><circle cx="15" cy="15" r="15" fill="#f5981d"/><path d="M10 33a7 7 0 0 1 0-13 8 8 0 0 1 15-1 7 7 0 0 1 3 14z" fill="#c3d6f7"/><path d="M24 28q5 6 3 9-3 3-6 0-1-3 3-9z" fill="#1c6fee"/></svg>
    <div class="clock pb-1"><div>91°F</div><div style="color:#555">Light rain</div></div>
  </div>
  <div class="d-flex">
    <button class="slot" aria-label="Start"><svg width="36" height="36" viewBox="0 0 36 36"><defs><linearGradient id="wg" x2="1" y2="1"><stop stop-color="#4fd0ff"/><stop offset="1" stop-color="#0067c5"/></linearGradient></defs><path d="M0 0h17.500v17.500H0zM18.500 0H36v17.500H18.500zM0 18.500h17.500V36H0zM18.500 18.500H36V36H18.500z" fill="url(#wg)"/></svg></button>
    <label class="find d-flex align-items-center"><svg width="22" height="23" viewBox="0 0 22 23"><circle cx="9.500" cy="9.500" r="8" fill="none" stroke="#222" stroke-width="2.400"/><path d="M15 15l6 7" stroke="#222" stroke-width="2.800"/></svg><input placeholder="Search" aria-label="Search"><svg width="30" height="30" viewBox="0 0 30 30"><path d="M15 1a14 14 0 1 1-8 25l-6 3 2-7A14 14 0 0 1 15 1z" fill="#fff" stroke="#1e8fe0" stroke-width="2"/><path d="M10 6l4 1.500V19l5-3-3-1.500-1-3.500 6 2.500v4L14 23l-4-2z" fill="#1585e6"/></svg></label>
    <button class="slot" aria-label="Task view"><svg width="36" height="34" viewBox="0 0 36 34"><rect y="9" width="27" height="25" rx="1" fill="#2e2e2e"/><rect x="9" width="27" height="25" rx="1" fill="#f2f2f2"/><path d="M9 9h18v16H9z" fill="#c2c2c2"/></svg></button>
    <button class="slot run" aria-label="File Explorer"><svg width="36" height="34" viewBox="0 0 36 34"><path d="M0 2q0-1 1-1h11l3 3v8H0z" fill="#dd9e0b"/><path d="M0 7h13l3-3h19q1 0 1 1v28H0z" fill="#fccb4b"/><path d="M6 34v-7q0-4 4-4h16q4 0 4 4v7z" fill="#0f74c9"/><path d="M11 28h14" stroke="#0a4c8c" stroke-width="2"/></svg></button>
    <button class="slot" aria-label="L"><svg width="36" height="36" viewBox="0 0 36 36"><path d="M0 0h36v36H0z" fill="#27acd9"/><path d="M12 5l-4 25 19-2v-5z" fill="#0d3550"/><path d="M12 5h7v18h8v5H11z" fill="#fff"/></svg></button>
    <button class="slot act" aria-label="Chrome"><svg width="36" height="36" viewBox="0 0 36 36"><circle cx="18" cy="18" r="18" fill="#fbbc05"/><path d="M18 0A18 18 0 0 0 2.400 9l8 13.500L18 9h15.600A18 18 0 0 0 18 0z" fill="#e33b2e"/><path d="M2.400 9A18 18 0 0 0 18 36l7.800-13.500L10.200 22.500z" fill="#26943f"/><circle cx="18" cy="18" r="9" fill="#fff"/><circle cx="18" cy="18" r="7" fill="#2b7de9"/></svg><b class="rounded-circle" style="left:34px;top:9px;width:25px;height:25px;background:#0c8274;font-size:12px;line-height:25px">T</b></button>
    <button class="slot run" aria-label="Telegram"><svg width="34" height="34" viewBox="0 0 34 34"><circle cx="17" cy="17" r="17" fill="#1f93d2"/><path d="M6 17l20-8-3 17-6-4-3 3-1-6z" fill="#fff"/></svg><b style="left:37px;top:16px;width:23px;height:17px;border-radius:5px;background:#f0403a;font-size:12px;line-height:17px">..04</b></button>
    <button class="slot run" aria-label="Word"><svg width="36" height="34" viewBox="0 0 36 34"><path d="M8 0h28v9H8z" fill="#41a5ee"/><path d="M8 9h28v8H8z" fill="#2b7cd3"/><path d="M8 17h28v8H8z" fill="#185abd"/><path d="M8 25h28v9H8z" fill="#103f91"/><rect y="7" width="19" height="19" rx="1" fill="#1a56b5"/><path d="M4 12l2.500 9 3-8 3 8 2.500-9" fill="none" stroke="#fff" stroke-width="2"/></svg></button>
    <button class="slot run" aria-label="VS Code"><svg width="36" height="36" viewBox="0 0 36 36"><path d="M26 0L1 23l4 4L27 10z" fill="#0a6fb5"/><path d="M1 13l4-4 22 17v10z" fill="#118ad0"/><path d="M26 0l10 4v28l-10 4z" fill="#25a3f0"/></svg></button>
    <button class="slot run" aria-label="WhatsApp"><svg width="36" height="36" viewBox="0 0 36 36"><path d="M18 0a17.500 17.500 0 1 1-8 33l-10 3 3-10A17.500 17.500 0 0 1 18 0z" fill="#fff"/><circle cx="18" cy="18" r="14" fill="#3dba50"/><path d="M4 32l2-8 6 6z" fill="#3dba50"/><path d="M12 10c-4 5 4 16 12 15l2-4-4-2-2 2c-3-1-4-3-5-5l1-2-1-4z" fill="#fff"/></svg><b style="left:27px;top:9px;width:40px;height:24px;border-radius:7px;background:#258394;font-size:15px;line-height:24px">99+</b></button>
    <button class="slot run" aria-label="Spotify"><svg width="36" height="36" viewBox="0 0 36 36"><circle cx="18" cy="18" r="18" fill="#1ed760"/><g fill="none" stroke="#101010" stroke-linecap="round"><path d="M8 12.500q11-3 21 2" stroke-width="3.600"/><path d="M8.500 18.500q9.500-2.500 17.500 2" stroke-width="3"/><path d="M9 24q8-2 15 2" stroke-width="2.400"/></g></svg></button>
  </div>
  <div class="d-flex align-items-center justify-content-end" style="padding-right:28px">
    <svg width="16" height="9" viewBox="0 0 16 9"><path d="M1 8l7-7 7 7" fill="none" stroke="#1b1b1b" stroke-width="1.800"/></svg>
    <svg style="margin-left:28px" width="24" height="18" viewBox="0 0 24 18"><g fill="none" stroke="#1b1b1b" stroke-width="1.500"><path d="M1 6.500q11-10.500 22 0M4.500 10q7.500-7 15 0M8 13.500q4-3.500 8 0"/></g><circle cx="12" cy="16" r="2" fill="#1b1b1b"/></svg>
    <svg style="margin-left:12px" width="23" height="18" viewBox="0 0 23 18"><path d="M1 6h4l5-5v16l-5-5H1z" fill="none" stroke="#1b1b1b" stroke-width="1.500"/><path d="M13 6q2 3 0 6M16 3.500q4 5.500 0 11" fill="none" stroke="#1b1b1b" stroke-width="1.500"/><path d="M19 1q5 8 0 16" fill="none" stroke="#9fb0b8" stroke-width="1.500"/></svg>
    <svg style="margin-left:12px;margin-right:24px" width="25" height="16" viewBox="0 0 25 16"><rect x="1" y="1" width="20" height="14" rx="3" fill="none" stroke="#1b1b1b" stroke-width="1.500"/><rect x="3.500" y="3.500" width="14" height="9" fill="#1b1b1b"/><path d="M22 5h2v6h-2z" fill="#1b1b1b" stroke="#1b1b1b"/></svg>
    <div class="clock text-end pb-1"><div>2:03 PM</div><div>8/26/2023</div></div>
    <span class="notif rounded-circle text-white text-center">10</span>
  </div>
</footer>
</body>
</html>
